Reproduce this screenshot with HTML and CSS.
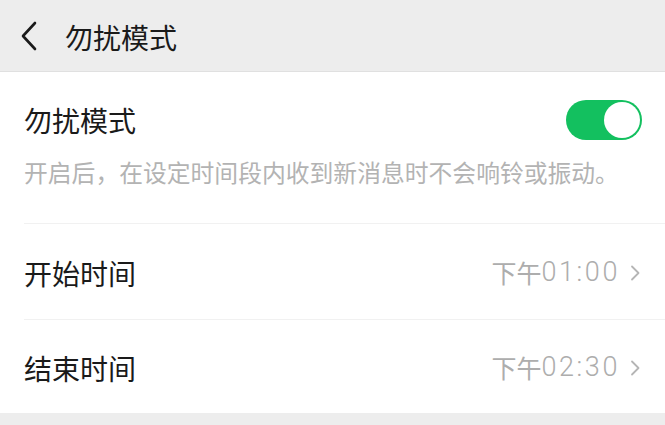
FILE: index.html
```html
<!DOCTYPE html>
<html lang="zh-CN">
<head>
<meta charset="utf-8">
<link rel="stylesheet" href="styles.css">
</head>
<body>
<div class="page">
  <header class="topbar">
    <svg class="back" width="16" height="30" viewBox="0 0 16 30"><polyline points="14,2 2,15 14,28" fill="none" stroke="#1a1a1a" stroke-width="2.6" stroke-linecap="round" stroke-linejoin="round"/></svg>
    <span class="title">勿扰模式</span>
  </header>
  <main class="card">
    <section class="switch-block">
      <div class="switch-row">
        <span class="label">勿扰模式</span>
        <span class="toggle"><span class="knob"></span></span>
      </div>
      <p class="desc">开启后，在设定时间段内收到新消息时不会响铃或振动。</p>
    </section>
    <div class="item item-first">
      <span class="label">开始时间</span>
      <span class="value">下午<span class="time">01:00</span><svg class="arrow" width="10" height="16" viewBox="0 0 10 16"><polyline points="2,1.5 8.5,8 2,14.5" fill="none" stroke="#b5b5b5" stroke-width="1.8" stroke-linecap="round" stroke-linejoin="round"/></svg></span>
    </div>
    <div class="item item-last">
      <span class="label">结束时间</span>
      <span class="value">下午<span class="time">02:30</span><svg class="arrow" width="10" height="16" viewBox="0 0 10 16"><polyline points="2,1.5 8.5,8 2,14.5" fill="none" stroke="#b5b5b5" stroke-width="1.8" stroke-linecap="round" stroke-linejoin="round"/></svg></span>
    </div>
  </main>
  <div class="footer-band"></div>
</div>
</body>
</html>
```

FILE: styles.css
```css
html, body {
  margin: 0;
  padding: 0;
  background: #ededed;
}
body {
  font-family: "Noto Sans CJK SC", "Noto Sans", sans-serif;
  color: #1a1a1a;
  width: 665px;
  height: 425px;
  overflow: hidden;
}
.topbar {
  height: 71px;
  border-bottom: 1px solid #e0e0e0;
  background: #ededed;
  display: flex;
  align-items: center;
  padding-left: 21px;
  box-sizing: content-box;
}
.back {
  display: block;
}
.title {
  font-size: 28px;
  margin-left: 28px;
  line-height: 1;
  margin-top: 2px;
}
.card {
  background: #ffffff;
  display: flex;
  flex-direction: column;
}
.switch-block {
  padding: 28px 23px 0 24px;
  height: 123px;
}
.switch-row {
  display: flex;
  align-items: center;
  justify-content: space-between;
  height: 40px;
}
.label {
  font-size: 28px;
  line-height: 1;
}
.toggle {
  width: 76px;
  height: 40px;
  border-radius: 20px;
  background: #13c05f;
  position: relative;
  display: block;
}
.knob {
  position: absolute;
  right: 2px;
  top: 2px;
  width: 36px;
  height: 36px;
  border-radius: 50%;
  background: #ffffff;
}
.desc {
  margin: 17px 0 0 0;
  font-size: 23.8px;
  line-height: 30px;
  color: #b3b3b3;
  white-space: nowrap;
}
.item {
  margin-left: 24px;
  padding-right: 25px;
  border-top: 1px solid #f1f1f1;
  display: flex;
  align-items: center;
  justify-content: space-between;
}
.item-first {
  height: 95px;
}
.item-last {
  height: 93px;
}
.item .label {
  margin-top: 2px;
}
.value {
  display: flex;
  align-items: center;
  font-size: 25px;
  color: #adadad;
  line-height: 1;
  margin-top: 2px;
}
.time {
  font-family: Roboto, "Noto Sans CJK SC", sans-serif;
  font-weight: 300;
  font-size: 27px;
  letter-spacing: 2.6px;
}
.arrow {
  display: block;
  margin-left: 10px;
}
.footer-band {
  height: 20px;
  background: #ededed;
}
```
